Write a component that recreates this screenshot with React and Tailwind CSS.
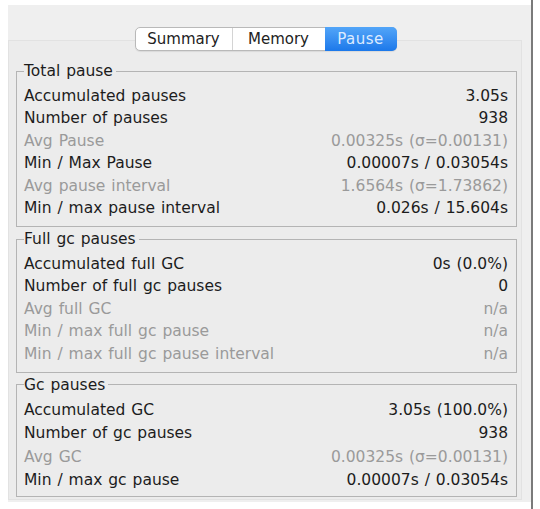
const groups = [
  {
    title: 'Total pause',
    rows: [
      ['Accumulated pauses', '3.05s'],
      ['Number of pauses', '938'],
      ['Avg Pause', '0.00325s (σ=0.00131)', true],
      ['Min / Max Pause', '0.00007s / 0.03054s'],
      ['Avg pause interval', '1.6564s (σ=1.73862)', true],
      ['Min / max pause interval', '0.026s / 15.604s'],
    ],
  },
  {
    title: 'Full gc pauses',
    rows: [
      ['Accumulated full GC', '0s (0.0%)'],
      ['Number of full gc pauses', '0'],
      ['Avg full GC', 'n/a', true],
      ['Min / max full gc pause', 'n/a', true],
      ['Min / max full gc pause interval', 'n/a', true],
    ],
  },
  {
    title: 'Gc pauses',
    tall: true,
    rows: [
      ['Accumulated GC', '3.05s (100.0%)'],
      ['Number of gc pauses', '938'],
      ['Avg GC', '0.00325s (σ=0.00131)', true],
      ['Min / max gc pause', '0.00007s / 0.03054s'],
    ],
  },
];

function Group({ title, rows, tall }) {
  return (
    <fieldset className={`border border-[#b4b4b4] pl-[7px] pr-[8px] pt-[5px] ${tall ? 'pb-[3px]' : 'pb-[6px]'}`}>
      <legend className="pr-[3px] text-[15.5px] leading-[18px] text-[#1c1c1c] [word-spacing:1px]">{title}</legend>
      {rows.map(([label, value, dim]) => (
        <div
          key={label}
          className={`flex items-center justify-between text-[15.5px] [word-spacing:1px] ${tall ? 'h-[23.5px]' : 'h-[22.5px]'} ${dim ? 'text-[#9a9a9a]' : 'text-[#1c1c1c]'}`}
        >
          <span>{label}</span>
          <span>{value}</span>
        </div>
      ))}
    </fieldset>
  );
}

export default function App() {
  return (
    <div className="w-[540px] h-[509px] bg-white flex" style={{ fontFamily: '"DejaVu Sans", "Liberation Sans", sans-serif' }}>
      <div className="ml-[8px] mt-[5px] w-[523px] h-[497px] bg-[#efefef]">
        <div className="relative mt-[35px] mr-[9px] h-[460px] border border-[#e2e2e2] bg-[#ececec] pl-[7px] pr-[4px] pt-[21px]">
          {/* tabs */}
          <div className="absolute -top-[14px] left-0 right-0 flex justify-center">
            <div className="ml-[1px] flex h-[24px] rounded-[5px] border border-[#b9b9b9] bg-white text-[15px] leading-[22px] shadow-[0_1px_1px_rgba(0,0,0,0.08)]">
              <div className="w-[97px] border-r border-[#d4d4d4] text-center text-[#222]">Summary</div>
              <div className="w-[92px] text-center text-[#222]">Memory</div>
              <div className="w-[72px] -my-px -mr-px rounded-r-[5px] bg-gradient-to-b from-[#52a5f8] to-[#1b78ea] text-center leading-[24px] tracking-[0.5px] text-[#dcebff]">
                Pause
              </div>
            </div>
          </div>
          <div className="flex flex-col gap-[3px]">
            {groups.map((g) => (
              <Group key={g.title} {...g} />
            ))}
          </div>
        </div>
      </div>
      <div className="w-[2px] h-full bg-[#7a7a7a]" />
    </div>
  );
}
